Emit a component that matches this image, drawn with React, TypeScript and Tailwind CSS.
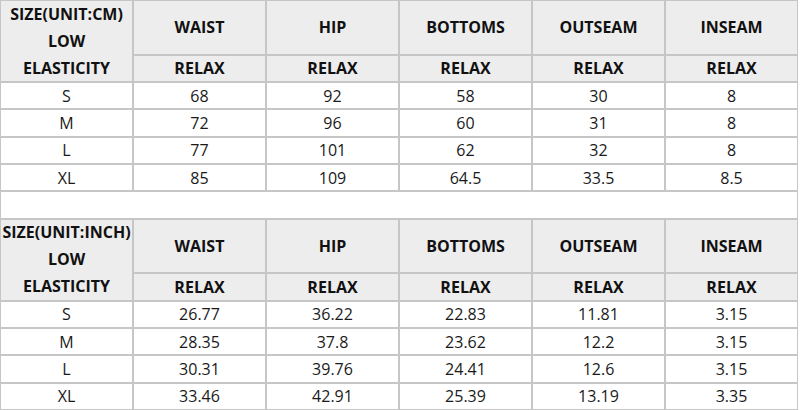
const columns = ['WAIST', 'HIP', 'BOTTOMS', 'OUTSEAM', 'INSEAM']

const cmRows = [
  ['S', '68', '92', '58', '30', '8'],
  ['M', '72', '96', '60', '31', '8'],
  ['L', '77', '101', '62', '32', '8'],
  ['XL', '85', '109', '64.5', '33.5', '8.5'],
]

const inchRows = [
  ['S', '26.77', '36.22', '22.83', '11.81', '3.15'],
  ['M', '28.35', '37.8', '23.62', '12.2', '3.15'],
  ['L', '30.31', '39.76', '24.41', '12.6', '3.15'],
  ['XL', '33.46', '42.91', '25.39', '13.19', '3.35'],
]

function Section({ unit, rows }: { unit: string; rows: string[][] }) {
  return (
    <>
      <div className="row-span-3 bg-[#ededed] flex flex-col items-center justify-center font-bold text-[16px] leading-[27px] text-[#111]">
        <span>SIZE(UNIT:{unit})</span>
        <span>LOW</span>
        <span>ELASTICITY</span>
      </div>
      {columns.map((c) => (
        <div key={c} className="row-span-2 bg-[#ededed] flex items-center justify-center font-bold text-[16px] text-[#111]">
          {c}
        </div>
      ))}
      {columns.map((c) => (
        <div key={c + '-r'} className="bg-[#ededed] flex items-center justify-center font-bold text-[16px] text-[#111]">
          RELAX
        </div>
      ))}
      {rows.map((r) =>
        r.map((v, i) => (
          <div key={r[0] + i} className="bg-white flex items-center justify-center text-[16px] text-[#1a1a1a]">
            {v}
          </div>
        ))
      )}
    </>
  )
}

export default function App() {
  return (
    <div className="w-[800px] h-[410px] bg-white" style={{ fontFamily: '"Open Sans", "Noto Sans", sans-serif' }}>
      <div className="w-[798px] h-[410px] bg-[#c6c6c6] p-[1px] grid grid-cols-6 grid-rows-[repeat(15,minmax(0,1fr))] gap-[2px]">
        <Section unit="CM" rows={cmRows} />
        <div className="col-span-6 bg-white" />
        <Section unit="INCH" rows={inchRows} />
      </div>
    </div>
  )
}
